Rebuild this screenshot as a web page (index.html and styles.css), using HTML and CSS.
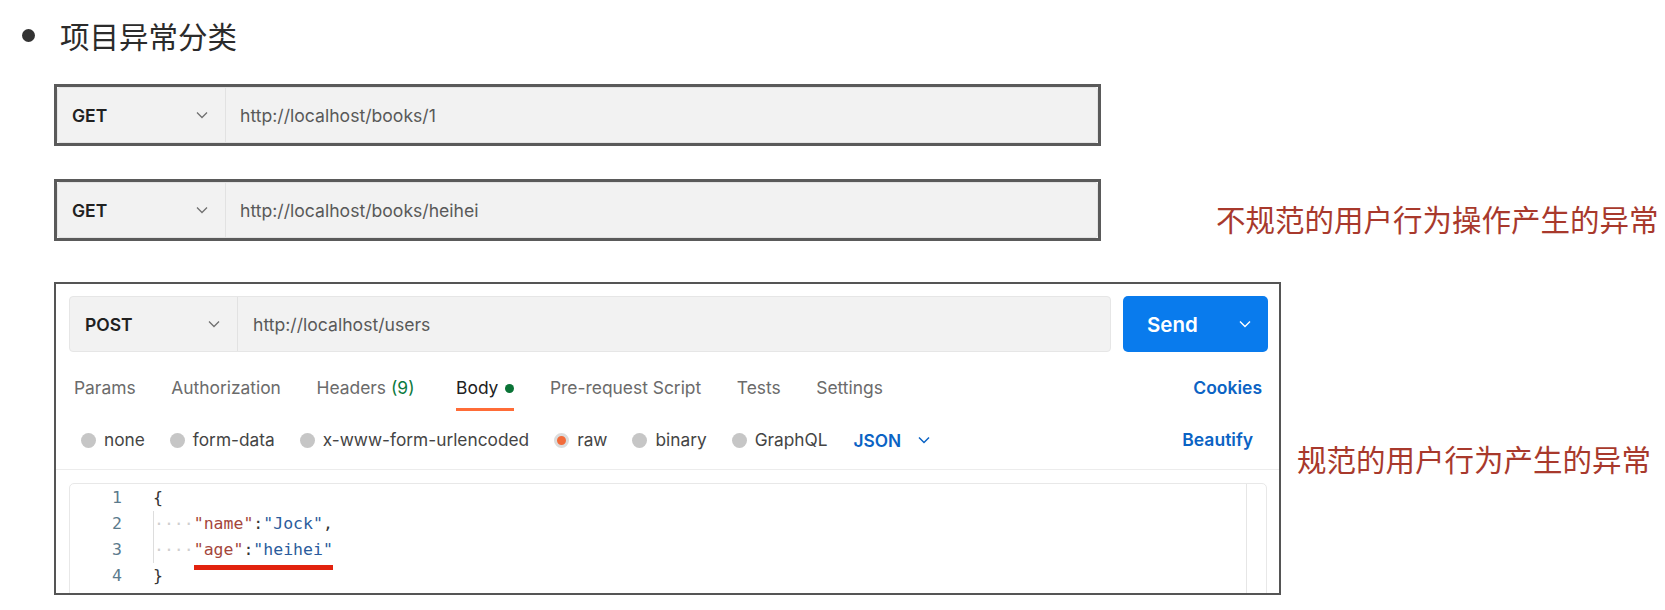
FILE: index.html
```html
<!DOCTYPE html>
<html lang="zh-CN">
<head>
<meta charset="utf-8">
<title>项目异常分类</title>
<link rel="stylesheet" href="styles.css">
</head>
<body>
<div class="page">
  <div class="heading"><span class="bullet"></span><span class="heading-text">项目异常分类</span></div>

  <div class="row row-first">
    <div class="frame-url">
      <div class="urlbar">
        <div class="method"><span class="method-name">GET</span><svg class="chev" width="12" height="8" viewBox="0 0 12 8"><path d="M1 1.5 L6 6.5 L11 1.5" fill="none" stroke="#707070" stroke-width="1.3"/></svg></div>
        <div class="url">http://localhost/books/1</div>
      </div>
    </div>
  </div>

  <div class="row row-second">
    <div class="frame-url">
      <div class="urlbar">
        <div class="method"><span class="method-name">GET</span><svg class="chev" width="12" height="8" viewBox="0 0 12 8"><path d="M1 1.5 L6 6.5 L11 1.5" fill="none" stroke="#707070" stroke-width="1.3"/></svg></div>
        <div class="url">http://localhost/books/heihei</div>
      </div>
    </div>
    <p class="note note-one">不规范的用户行为操作产生的异常</p>
  </div>

  <div class="row row-third">
    <div class="frame-post">
      <div class="req-row">
        <div class="urlbar urlbar-post">
          <div class="method method-post"><span class="method-name">POST</span><svg class="chev" width="12" height="8" viewBox="0 0 12 8"><path d="M1 1.5 L6 6.5 L11 1.5" fill="none" stroke="#707070" stroke-width="1.3"/></svg></div>
          <div class="url url-post">http://localhost/users</div>
        </div>
        <div class="send"><span>Send</span><svg width="12" height="8" viewBox="0 0 12 8"><path d="M1 1.5 L6 6.5 L11 1.5" fill="none" stroke="#ffffff" stroke-width="1.4"/></svg></div>
      </div>

      <div class="tabs">
        <div class="tab-list">
          <span class="tab">Params</span>
          <span class="tab">Authorization</span>
          <span class="tab">Headers <span class="count">(9)</span></span>
          <span class="tab tab-active">Body <span class="gdot"></span></span>
          <span class="tab">Pre-request Script</span>
          <span class="tab">Tests</span>
          <span class="tab">Settings</span>
        </div>
        <span class="link">Cookies</span>
      </div>

      <div class="body-types">
        <div class="radios">
          <span class="radio"><span class="circle"></span>none</span>
          <span class="radio"><span class="circle"></span>form-data</span>
          <span class="radio"><span class="circle"></span>x-www-form-urlencoded</span>
          <span class="radio"><span class="circle circle-on"></span>raw</span>
          <span class="radio"><span class="circle"></span>binary</span>
          <span class="radio"><span class="circle"></span>GraphQL</span>
          <span class="json">JSON<svg width="12" height="8" viewBox="0 0 12 8"><path d="M1 1.5 L6 6.5 L11 1.5" fill="none" stroke="#0b63c4" stroke-width="1.5"/></svg></span>
        </div>
        <span class="link">Beautify</span>
      </div>

      <div class="editor">
        <div class="lines">
          <div class="line"><span class="num">1</span><span class="code"><span class="p">{</span></span></div>
          <div class="line"><span class="num">2</span><span class="code"><span class="ind">····</span><span class="k">"name"</span><span class="p">:</span><span class="v">"Jock"</span><span class="p">,</span></span></div>
          <div class="line"><span class="num">3</span><span class="code"><span class="ind">····</span><span class="mark"><span class="k">"age"</span><span class="p">:</span><span class="v">"heihei"</span></span></span></div>
          <div class="line"><span class="num">4</span><span class="code"><span class="p">}</span></span></div>
        </div>
        <div class="scroll"></div>
      </div>
    </div>
    <p class="note note-two">规范的用户行为产生的异常</p>
  </div>
</div>
</body>
</html>
```

FILE: styles.css
```css
* { box-sizing: border-box; }
html, body { margin: 0; padding: 0; background: #ffffff; }
body { font-family: Inter, "Noto Sans", "Noto Sans CJK SC", sans-serif; color: #212121; }

.page { padding-top: 15px; }

.heading { display: flex; align-items: center; height: 40px; padding-left: 22px; }
.bullet { width: 13px; height: 13px; border-radius: 50%; background: #333333; margin-right: 25px; }
.heading-text { font-family: "Noto Sans CJK SC", sans-serif; font-size: 29.5px; line-height: 40px; color: #2b2b2b; }

.row { display: flex; align-items: flex-start; padding-left: 54px; }
.row-first { margin-top: 29px; }
.row-second { margin-top: 33px; }
.row-third { margin-top: 41px; }

.frame-url { width: 1047px; height: 62px; border: 3px solid #5a5a5a; background: #ffffff; }
.urlbar { display: flex; height: 100%; background: #f2f2f2; border: 1px solid #e4e4e4; border-radius: 3px; }
.method { display: flex; align-items: center; justify-content: space-between; width: 168px; padding: 0 17px 0 14px; border-right: 1px solid #e2e2e2; }
.method-name { font-size: 17.5px; font-weight: 600; color: #212121; }
.url { display: flex; align-items: center; padding-left: 14px; font-size: 17.6px; color: #595959; }

.note { margin: 0; font-family: "Noto Sans CJK SC", sans-serif; font-size: 29.5px; line-height: 40px; color: #a8392c; white-space: nowrap; }
.note-one { margin-top: 19px; margin-left: 115px; }
.note-two { margin-top: 156px; margin-left: 16px; }

.frame-post { width: 1227px; height: 313px; border: 2px solid #555555; background: #ffffff; overflow: hidden; }
.req-row { display: flex; gap: 12px; padding: 12px 11px 0 13px; }
.urlbar-post { flex: 1; height: 56px; border-radius: 4px; border-color: #e6e6e6; }
.method-post { width: 168px; padding: 0 17px 0 15px; }
.url-post { padding-left: 15px; }
.send { width: 145px; height: 56px; background: #097bed; border-radius: 5px; display: flex; align-items: center; justify-content: space-between; padding: 0 17px 0 24px; color: #ffffff; font-size: 20.5px; font-weight: 600; }

.tabs { display: flex; justify-content: space-between; align-items: flex-start; padding: 0 17px 0 18px; }
.tab-list { display: flex; gap: 35.6px; }
.tab { padding: 24px 0 8px; border-bottom: 3px solid transparent; font-size: 17.4px; line-height: 24px; color: #6b6b6b; display: flex; align-items: center; gap: 5px; }
.tab-active { color: #212121; border-bottom-color: #ff6c37; margin-left: 6px; }
.count { color: #0c7a3e; }
.gdot { width: 9px; height: 9px; border-radius: 50%; background: #0a7336; margin-left: 2px; }
.link { padding-top: 24px; font-size: 17.5px; line-height: 24px; font-weight: 600; color: #0b63c4; }

.body-types { display: flex; justify-content: space-between; align-items: center; height: 59px; padding: 0 26px 0 25px; border-bottom: 1px solid #ececec; }
.body-types .link { padding-top: 0; }
.radios { display: flex; align-items: center; gap: 25px; }
.radio { display: flex; align-items: center; gap: 8px; font-size: 17.3px; line-height: 24px; color: #444444; }
.circle { width: 15px; height: 15px; border-radius: 50%; background: #c6c6c6; }
.circle-on { background: #f26b3a; border: 3px solid #dcdcdc; }
.json { display: flex; align-items: center; gap: 17px; font-size: 17.3px; font-weight: 600; color: #0b63c4; margin-left: 1px; }

.editor { display: flex; margin: 13px 12px 0 13px; height: 140px; border: 1px solid #e8e8e8; border-radius: 5px 5px 0 0; }
.lines { flex: 1; padding-top: 1px; }
.line { display: flex; height: 26px; font-family: "DejaVu Sans Mono", "Liberation Mono", monospace; font-size: 16.5px; line-height: 26px; white-space: pre; }
.num { width: 52px; text-align: right; color: #5b7a8c; }
.code { padding-left: 31px; color: #333333; }
.ind { display: inline-block; border-left: 1px solid #dddddd; color: #cfcfcf; height: 26px; }
.k { color: #a4463b; }
.v { color: #2a5b9c; }
.p { color: #333333; }
.mark { border-bottom: 5px solid #e2220e; padding-bottom: 6px; }
.scroll { width: 20px; border-left: 1px solid #e6e6e6; }
```
